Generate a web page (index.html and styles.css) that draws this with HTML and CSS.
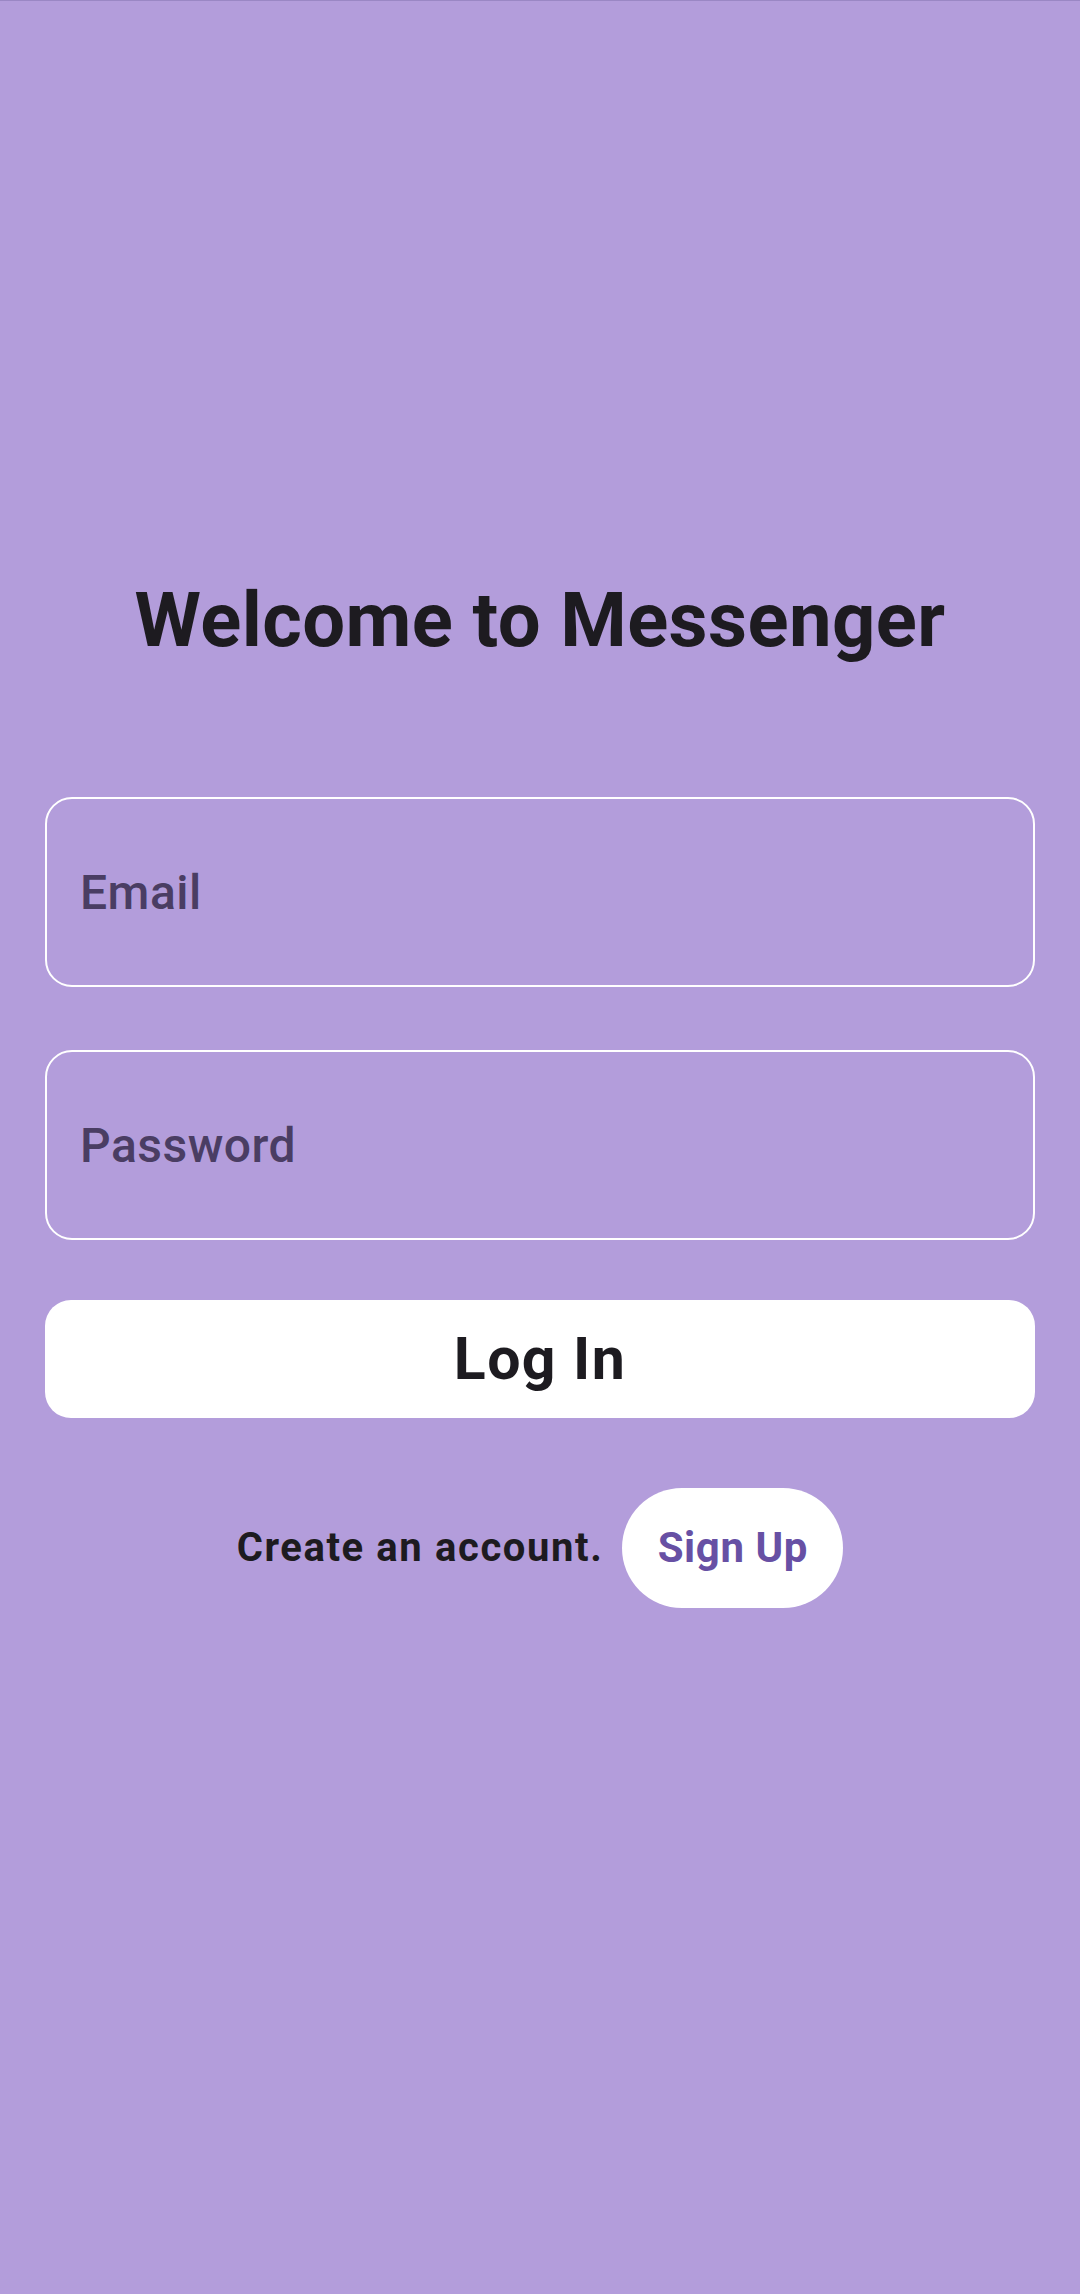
FILE: index.html
```html
<!DOCTYPE html>
<html lang="en">
<head>
<meta charset="utf-8">
<title>Messenger</title>
<link rel="stylesheet" href="styles.css">
</head>
<body>
<div class="screen">
  <main class="login">
    <h1 class="title">Welcome to Messenger</h1>
    <form class="form">
      <input class="field" type="email" placeholder="Email">
      <input class="field" type="password" placeholder="Password">
      <button class="login-btn" type="button">Log In</button>
    </form>
    <div class="signup-row">
      <span class="signup-text">Create an account.</span>
      <button class="signup-btn" type="button">Sign Up</button>
    </div>
  </main>
</div>
</body>
</html>
```

FILE: styles.css
```css
html, body {
  margin: 0;
  padding: 0;
}
body {
  background: #b39ddb;
  font-family: Roboto, "Noto Sans", "Liberation Sans", sans-serif;
  color: #1d1b20;
}
.screen {
  min-height: 2294px;
  border-top: 1px solid #9a87c4;
  box-sizing: border-box;
}
.login {
  display: flex;
  flex-direction: column;
  padding: 575px 45px 0;
}
.title {
  margin: 0;
  text-align: center;
  font-size: 76px;
  line-height: 88px;
  letter-spacing: 0.4px;
  font-weight: 700;
  color: #1d1b20;
}
.form {
  display: flex;
  flex-direction: column;
  margin-top: 133px;
}
.field {
  box-sizing: border-box;
  height: 190px;
  border: 2px solid #ffffff;
  border-radius: 27px;
  background: transparent;
  padding: 0 0 0 33px;
  font-family: inherit;
  font-size: 48px;
  font-weight: 500;
  line-height: 1.2;
  letter-spacing: 0.5px;
  color: #1d1b20;
  outline: none;
}
.field + .field {
  margin-top: 63px;
}
.field::placeholder {
  color: #4a3d63;
  opacity: 1;
}
.login-btn {
  margin-top: 60px;
  height: 118px;
  border: none;
  border-radius: 26px;
  background: #ffffff;
  font-family: inherit;
  font-size: 59px;
  line-height: 1.2;
  letter-spacing: 1.4px;
  font-weight: 700;
  color: #1d1b20;
  padding: 0;
}
.signup-row {
  display: flex;
  justify-content: center;
  align-items: center;
  gap: 19px;
  margin-top: 70px;
}
.signup-text {
  font-size: 40px;
  line-height: 1.2;
  letter-spacing: 1.6px;
  font-weight: 700;
  color: #1d1b20;
}
.signup-btn {
  height: 120px;
  width: 221px;
  padding: 0;
  border: none;
  border-radius: 60px;
  background: #ffffff;
  font-family: inherit;
  font-size: 42px;
  line-height: 1.2;
  letter-spacing: 0.6px;
  font-weight: 700;
  color: #6750a4;
}
```
